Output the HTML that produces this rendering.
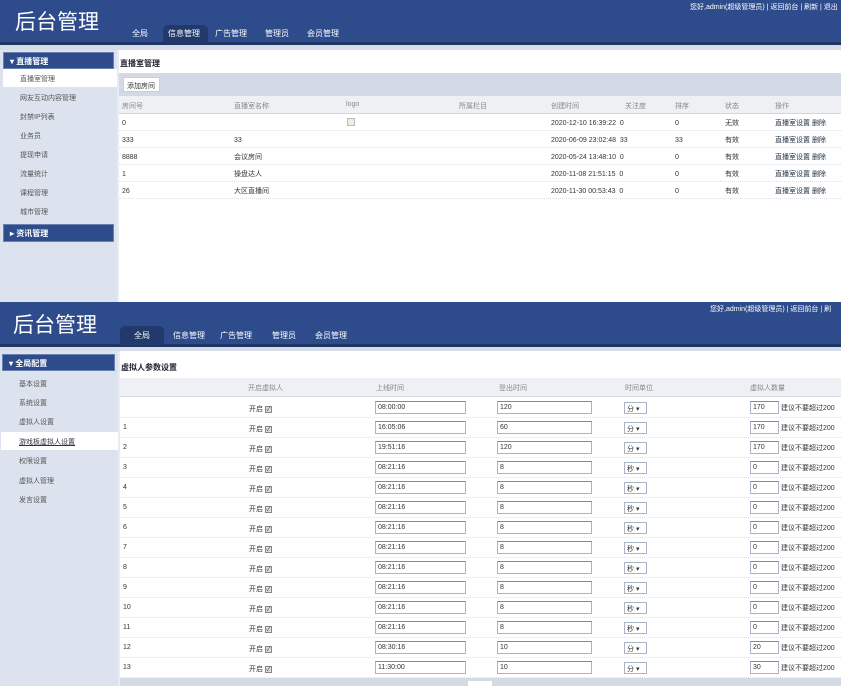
<!DOCTYPE html>
<html><head><meta charset="utf-8">
<style>
*{margin:0;padding:0;box-sizing:border-box}
body{width:841px;height:686px;overflow:hidden;background:#fff;font-family:"Liberation Sans","Noto Sans CJK SC",sans-serif;font-size:7px;color:#333;position:relative}
.a{position:absolute;white-space:nowrap}
.hdr{background:#2e4c8c}
.dk{background:#1f3563}
.title{color:#fff;font-size:21px;font-family:"Liberation Sans","Noto Sans CJK SC",sans-serif}
.nav{color:#fff;font-size:8px}
.tab{background:#22396b;border-radius:5px 5px 0 0}
.side{background:#dde3ee}
.sbar{background:#2e4c8c;color:#fff;font-weight:bold;font-size:8px;border:1px solid #6a80b0;padding:3px 0 0 6px}
.si{color:#555;font-size:7px}
.row{border-bottom:1px dotted #dde2ea}
.inp{border:1px solid #a9b4c6;border-top-color:#7f8aa0;background:#fff;height:13px;font-size:7px;padding:2px 2px 0}
.sel{border:1px solid #a9b4c6;background:#fff;height:12px;font-size:7px;padding:1px 2px}
.chk{display:inline-block;width:7px;height:7px;border:1px solid #888;background:#ddd;font-size:6px;line-height:6px;text-align:center;vertical-align:middle}
</style></head><body>

<div class="a hdr" style="left:0;top:0;width:841px;height:43px"></div>
<div class="a dk" style="left:0;top:42px;width:841px;height:3px"></div>
<div class="a" style="left:0;top:45px;width:841px;height:5px;background:#d6dde8"></div>
<div class="a title" style="left:15px;top:6px">后台管理</div>
<div class="a tab" style="left:163px;top:25px;width:45px;height:18px"></div>
<div class="a nav" style="left:132px;top:28px">全局</div>
<div class="a nav" style="left:168px;top:28px">信息管理</div>
<div class="a nav" style="left:215px;top:28px">广告管理</div>
<div class="a nav" style="left:265px;top:28px">管理员</div>
<div class="a nav" style="left:307px;top:28px">会员管理</div>
<div class="a" style="left:690px;top:2px;color:#fff;font-size:7px">您好,admin(超级管理员) | 返回前台 | 刷新 | 退出</div>

<div class="a side" style="left:0;top:50px;width:117px;height:252px"></div>
<div class="a" style="left:117px;top:50px;width:2px;height:252px;background:#e8ecf2"></div>
<div class="a sbar" style="left:3px;top:52px;width:111px;height:17px">▾ 直播管理</div>
<div class="a" style="left:3px;top:69px;width:114px;height:18px;background:#fff"></div>
<div class="a si" style="left:20px;top:74px">直播室管理</div>
<div class="a si" style="left:20px;top:93px">网友互动内容管理</div>
<div class="a si" style="left:20px;top:112px">封禁IP列表</div>
<div class="a si" style="left:20px;top:131px">业务员</div>
<div class="a si" style="left:20px;top:150px">提现申请</div>
<div class="a si" style="left:20px;top:169px">流量统计</div>
<div class="a si" style="left:20px;top:188px">课程管理</div>
<div class="a si" style="left:20px;top:207px">城市管理</div>
<div class="a sbar" style="left:3px;top:224px;width:111px;height:18px">▸ 资讯管理</div>

<div class="a" style="left:120px;top:58px;font-weight:bold;font-size:8px;color:#223">直播室管理</div>
<div class="a" style="left:119px;top:73px;width:722px;height:23px;background:#d3dae6"></div>
<div class="a" style="left:123px;top:77px;width:37px;height:15px;background:#fff;border:1px solid #c8cfdb;font-size:7px;padding:3px 0 0 3px">添加房间</div>
<div class="a" style="left:119px;top:96px;width:722px;height:18px;background:#eef0f4;border-bottom:1px solid #cfd6e2"></div>
<div class="a si" style="left:122px;top:101px;color:#888">房间号</div>
<div class="a si" style="left:234px;top:101px;color:#888">直播室名称</div>
<div class="a si" style="left:346px;top:101px;color:#888">logo</div>
<div class="a si" style="left:459px;top:101px;color:#888">所属栏目</div>
<div class="a si" style="left:551px;top:101px;color:#888">创建时间</div>
<div class="a si" style="left:625px;top:101px;color:#888">关注度</div>
<div class="a si" style="left:675px;top:101px;color:#888">排序</div>
<div class="a si" style="left:725px;top:101px;color:#888">状态</div>
<div class="a si" style="left:775px;top:101px;color:#888">操作</div>
<div class="a" style="left:119px;top:114px;width:722px;height:0">
 <div class="a row" style="top:0;width:722px;height:17px"></div>
 <div class="a row" style="top:17px;width:722px;height:17px"></div>
 <div class="a row" style="top:34px;width:722px;height:17px"></div>
 <div class="a row" style="top:51px;width:722px;height:17px"></div>
 <div class="a row" style="top:68px;width:722px;height:17px"></div>
</div>
<div class="a" style="left:122px;top:115px;line-height:17px">0<br>333<br>8888<br>1<br>26</div>
<div class="a" style="left:234px;top:115px;line-height:17px">&nbsp;<br>33<br>会议房间<br>操盘达人<br>大区直播间</div>
<div class="a" style="left:347px;top:118px;width:8px;height:8px;border:1px solid #bbb;background:#e8f0e0"></div>
<div class="a" style="left:551px;top:115px;line-height:17px">2020-12-10 16:39:22 &nbsp;0<br>2020-06-09 23:02:48 &nbsp;33<br>2020-05-24 13:48:10 &nbsp;0<br>2020-11-08 21:51:15 &nbsp;0<br>2020-11-30 00:53:43 &nbsp;0</div>
<div class="a" style="left:675px;top:115px;line-height:17px">0<br>33<br>0<br>0<br>0</div>
<div class="a" style="left:725px;top:115px;line-height:17px">无效<br>有效<br>有效<br>有效<br>有效</div>
<div class="a" style="left:775px;top:115px;line-height:17px;color:#234">直播室设置 删除<br>直播室设置 删除<br>直播室设置 删除<br>直播室设置 删除<br>直播室设置 删除</div>

<div class="a hdr" style="left:0;top:302px;width:841px;height:42px"></div>
<div class="a dk" style="left:0;top:344px;width:841px;height:3px"></div>
<div class="a" style="left:0;top:347px;width:841px;height:4px;background:#d6dde8"></div>
<div class="a title" style="left:13px;top:309px">后台管理</div>
<div class="a tab" style="left:120px;top:326px;width:44px;height:19px"></div>
<div class="a nav" style="left:134px;top:330px">全局</div>
<div class="a nav" style="left:173px;top:330px">信息管理</div>
<div class="a nav" style="left:220px;top:330px">广告管理</div>
<div class="a nav" style="left:272px;top:330px">管理员</div>
<div class="a nav" style="left:315px;top:330px">会员管理</div>
<div class="a" style="left:710px;top:304px;color:#fff;font-size:7px">您好,admin(超级管理员) | 返回前台 | 刷</div>

<div class="a side" style="left:0;top:351px;width:118px;height:335px"></div>
<div class="a" style="left:118px;top:351px;width:2px;height:335px;background:#e8ecf2"></div>
<div class="a sbar" style="left:2px;top:354px;width:113px;height:17px">▾ 全局配置</div>
<div class="a si" style="left:19px;top:379px">基本设置</div>
<div class="a si" style="left:19px;top:398px">系统设置</div>
<div class="a si" style="left:19px;top:417px">虚拟人设置</div>
<div class="a" style="left:1px;top:432px;width:117px;height:18px;background:#fff"></div>
<div class="a si" style="left:19px;top:437px;text-decoration:underline;color:#334">游戏板虚拟人设置</div>
<div class="a si" style="left:19px;top:456px">权限设置</div>
<div class="a si" style="left:19px;top:476px">虚拟人管理</div>
<div class="a si" style="left:19px;top:495px">发言设置</div>

<div class="a" style="left:121px;top:362px;font-weight:bold;font-size:8px;color:#223">虚拟人参数设置</div>
<div class="a" style="left:120px;top:378px;width:721px;height:19px;background:#eef0f4;border-bottom:1px solid #d6dce6"></div>
<div class="a si" style="left:248px;top:383px;color:#888">开启虚拟人</div>
<div class="a si" style="left:376px;top:383px;color:#888">上线时间</div>
<div class="a si" style="left:499px;top:383px;color:#888">登出时间</div>
<div class="a si" style="left:625px;top:383px;color:#888">时间单位</div>
<div class="a si" style="left:750px;top:383px;color:#888">虚拟人数量</div>

<div id="rows"></div>
<div class="a" style="left:120px;top:678px;width:721px;height:8px;background:#d3dae6"></div>
<div class="a" style="left:468px;top:681px;width:24px;height:5px;background:#fff"></div>

<script>
var d=[["0","08:00:00","120","分","170"],["1","16:05:06","60","分","170"],["2","19:51:16","120","分","170"],["3","08:21:16","8","秒","0"],["4","08:21:16","8","秒","0"],["5","08:21:16","8","秒","0"],["6","08:21:16","8","秒","0"],["7","08:21:16","8","秒","0"],["8","08:21:16","8","秒","0"],["9","08:21:16","8","秒","0"],["10","08:21:16","8","秒","0"],["11","08:21:16","8","秒","0"],["12","08:30:16","10","分","20"],["13","11:30:00","10","分","30"]];
var h="";
for(var i=0;i<d.length;i++){var y=398+i*20;var r=d[i];
h+='<div class="a row" style="left:120px;top:'+y+'px;width:721px;height:20px"></div>';
h+='<div class="a" style="left:123px;top:'+(y+6)+'px">'+(i==0?"":r[0])+'</div>';
h+='<div class="a" style="left:249px;top:'+(y+6)+'px">开启 <span class="chk">✓</span></div>';
h+='<div class="a inp" style="left:375px;top:'+(y+3)+'px;width:91px">'+r[1]+'</div>';
h+='<div class="a inp" style="left:497px;top:'+(y+3)+'px;width:95px">'+r[2]+'</div>';
h+='<div class="a sel" style="left:624px;top:'+(y+4)+'px;width:23px">'+r[3]+' ▾</div>';
h+='<div class="a inp" style="left:750px;top:'+(y+3)+'px;width:29px">'+r[4]+'</div>';
h+='<div class="a" style="left:781px;top:'+(y+5)+'px">建议不要超过200</div>';}
document.getElementById("rows").outerHTML=h;
</script>
</body></html>
